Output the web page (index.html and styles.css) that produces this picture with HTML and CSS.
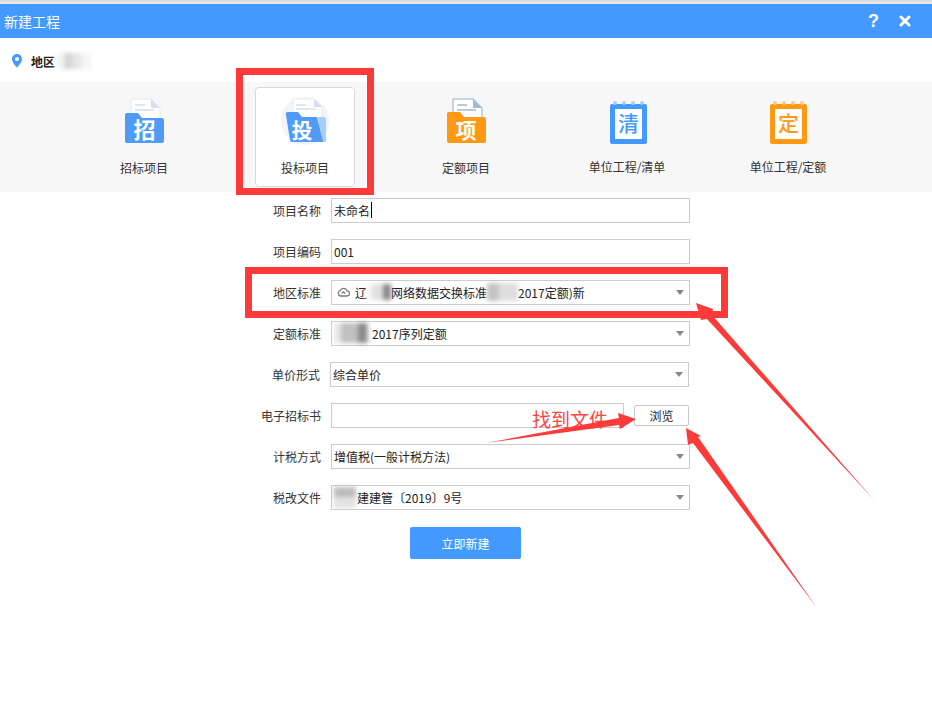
FILE: index.html
```html
<!DOCTYPE html>
<html lang="zh-CN">
<head>
    <meta charset="UTF-8">
    <meta name="viewport" content="width=device-width, initial-scale=1.0">
    <title>新建工程</title>
    <link rel="stylesheet" href="styles.css">
</head>
<body>
    <div class="top-edge"></div>
    <header class="title-bar">
        <span class="title">新建工程</span>
        <div class="title-actions">
            <span class="help">?</span>
            <svg class="close" width="12" height="12" viewBox="0 0 12 12"><path d="M2 2 L10 10 M10 2 L2 10" stroke="#fff" stroke-width="3" stroke-linecap="round"/></svg>
        </div>
    </header>

    <div class="region">
        <svg width="10" height="14" viewBox="0 0 10 14"><path fill-rule="evenodd" fill="#4499ff" d="M5 0 C2.2 0 0 2.2 0 5 C0 8.4 3.6 12 5 13.6 C6.4 12 10 8.4 10 5 C10 2.2 7.8 0 5 0 Z M5 3 A2 2 0 1 1 5 7 A2 2 0 1 1 5 3 Z"/></svg>
        <span class="region-name">地区</span>
        <span class="smudge smudge-region"></span>
    </div>

    <nav class="tabs">
        <div class="tab">
            <svg class="tab-icon" width="48" height="48" viewBox="0 0 48 48">
                <path d="M11 2 H31 L40 11 V30 H11 Z" fill="#fff" stroke="#e3e9f2"/>
                <path d="M31 2 L40 11 H31 Z" fill="#d5e1f0"/>
                <path d="M15 8 H25 M15 13 H34" stroke="#dfe6f0" stroke-width="2"/>
                <path d="M7 16 H18 L22 21 H42 Q44 21 44 23 V44 Q44 46 42 46 H7 Q5 46 5 44 V18 Q5 16 7 16 Z" fill="#4f9bf7"/>
                <text class="icon-char" x="24.5" y="41" font-size="22" fill="#fff">招</text>
            </svg>
            <span class="tab-label">招标项目</span>
        </div>
        <div class="tab tab-active">
            <svg class="tab-icon" width="48" height="48" viewBox="0 0 48 48">
                <circle cx="24" cy="24" r="24" fill="#f2f4f7"/>
                <path d="M12 2 H33 L41 10 V30 H12 Z" fill="#fff" stroke="#e3e9f2"/>
                <path d="M33 2 L41 10 H33 Z" fill="#d5e1f0"/>
                <path d="M15 8 H25 M15 12 H35" stroke="#dfe6f0" stroke-width="2"/>
                <path d="M37 20 H43 Q45 20 45 22 V45 H40 Z" fill="#a6cefc"/>
                <path d="M5 18 Q4 15 7 15 H17 L21 20 H36 L42 45 H11 Q9 45 9 43 Z" fill="#4f9bf7"/>
                <text class="icon-char" x="21" y="41" font-size="21" fill="#fff">投</text>
            </svg>
            <span class="tab-label">投标项目</span>
        </div>
        <div class="tab">
            <svg class="tab-icon" width="48" height="48" viewBox="0 0 48 48">
                <path d="M11 2 H31 L40 11 V30 H11 Z" fill="#fff" stroke="#b4c6da" stroke-width="1.5"/>
                <path d="M31 2 L40 11 H31 Z" fill="#a5b9d0"/>
                <path d="M15 8 H25 M15 13 H34" stroke="#bccbdc" stroke-width="2"/>
                <path d="M7 15 H18 L22 20 H42 Q44 20 44 22 V44 Q44 46 42 46 H7 Q5 46 5 44 V17 Q5 15 7 15 Z" fill="#ff9914"/>
                <text class="icon-char" x="24" y="41" font-size="21" fill="#fff">项</text>
            </svg>
            <span class="tab-label">定额项目</span>
        </div>
        <div class="tab tab-note">
            <svg class="tab-icon" width="48" height="48" viewBox="0 0 48 48">
                <rect x="7" y="7" width="37" height="40" rx="2" fill="#4499ff"/>
                <rect x="12" y="12" width="27" height="30" fill="#fff"/>
                <g fill="#a9d0fc"><circle cx="12" cy="6" r="2"/><circle cx="21" cy="6" r="2"/><circle cx="30" cy="6" r="2"/><circle cx="39" cy="6" r="2"/></g>
                <text class="icon-char icon-char-thin" x="25.5" y="34" font-size="21" fill="#4499ff">清</text>
            </svg>
            <span class="tab-label">单位工程/清单</span>
        </div>
        <div class="tab tab-note">
            <svg class="tab-icon" width="48" height="48" viewBox="0 0 48 48">
                <rect x="6" y="7" width="37" height="40" rx="2" fill="#ff9914"/>
                <rect x="11" y="12" width="27" height="30" fill="#fff"/>
                <g fill="#fcc98a"><circle cx="11" cy="6" r="2"/><circle cx="20" cy="6" r="2"/><circle cx="29" cy="6" r="2"/><circle cx="38" cy="6" r="2"/></g>
                <text class="icon-char icon-char-thin" x="24.5" y="34" font-size="21" fill="#ff9914">定</text>
            </svg>
            <span class="tab-label">单位工程/定额</span>
        </div>
    </nav>

    <main class="form">
        <div class="row">
            <label>项目名称</label>
            <div class="field">未命名<span class="text-cursor"></span></div>
        </div>
        <div class="row">
            <label>项目编码</label>
            <div class="field">001</div>
        </div>
        <div class="row">
            <label>地区标准</label>
            <div class="field select">
                <svg class="cloud" width="13" height="10" viewBox="0 0 13 10"><path d="M3.5 9 H9.8 A2.6 2.6 0 0 0 10 3.8 A3.6 3.6 0 0 0 3.2 3.6 A2.8 2.8 0 0 0 3.5 9 Z M4.6 6.6 L6.5 4.8 L8.4 6.6" fill="none" stroke="#777" stroke-width="1.3"/></svg>
                <span class="select-text">辽<span class="smudge smudge-a"></span>网络数据交换标准<span class="smudge smudge-b"></span>2017定额)新</span>
                <span class="arrow-down"></span>
            </div>
        </div>
        <div class="row">
            <label>定额标准</label>
            <div class="field select">
                <span class="select-text"><span class="smudge smudge-c"></span>2017序列定额</span>
                <span class="arrow-down"></span>
            </div>
        </div>
        <div class="row row-shift">
            <label>单价形式</label>
            <div class="field select">
                <span class="select-text">综合单价</span>
                <span class="arrow-down"></span>
            </div>
        </div>
        <div class="row">
            <label>电子招标书</label>
            <div class="field field-file"></div>
            <button class="browse-btn">浏览</button>
        </div>
        <div class="row">
            <label>计税方式</label>
            <div class="field select">
                <span class="select-text">增值税(一般计税方法)</span>
                <span class="arrow-down"></span>
            </div>
        </div>
        <div class="row">
            <label>税改文件</label>
            <div class="field select">
                <span class="select-text"><span class="smudge smudge-d"></span>建建管〔2019〕9号</span>
                <span class="arrow-down"></span>
            </div>
        </div>
        <button class="submit-btn">立即新建</button>
    </main>

    <!-- red markup drawn over the screenshot -->
    <svg class="markup" width="932" height="707" viewBox="0 0 932 707">
        <rect x="239.5" y="71.5" width="131" height="120" fill="none" stroke="#fc3a3a" stroke-width="7"/>
        <rect x="248.5" y="270.5" width="476" height="44" fill="none" stroke="#fc3a3a" stroke-width="7"/>
        <text class="markup-text" x="532" y="427">找到文件</text>
        <polygon fill="#fc3a3a" points="696,303 713,309 712,315 874,500 707,319 701,320"/>
        <polygon fill="#fc3a3a" points="686,428 701,436 698,437 817,608 693,443 688,445"/>
        <polygon fill="#fc3a3a" points="636,419 618,413 619,418 486,443 619,425 620,429"/>
    </svg>
</body>
</html>
```

FILE: styles.css
```css
* {
    box-sizing: border-box;
}

html, body {
    height: 100%;
}

body {
    position: relative;
    margin: 0;
    overflow: hidden;
    background-color: #fff;
    color: #333;
    font-family: "Noto Sans CJK SC", "Liberation Sans", sans-serif;
    font-size: 12px;
}

.top-edge {
    height: 4px;
    background: linear-gradient(#d8d8d8, #efefef);
}

.title-bar {
    display: flex;
    align-items: center;
    justify-content: space-between;
    height: 34px;
    padding: 0 21px 0 4px;
    background-color: #4499ff;
    color: #fff;
}

.title {
    font-size: 14px;
}

.title-actions {
    display: flex;
    align-items: center;
    gap: 20px;
}

.help {
    font-family: "Liberation Sans", sans-serif;
    font-size: 18px;
    font-weight: bold;
}

.region {
    display: flex;
    align-items: center;
    height: 46px;
    padding-left: 12px;
}

.region-name {
    margin-left: 9px;
    color: #222;
    font-weight: bold;
}

.tabs {
    display: flex;
    gap: 61px;
    height: 110px;
    margin-top: -2px;
    padding: 5px 0 5px 94px;
    background-color: #f7f7f7;
}

.tab {
    display: flex;
    flex-direction: column;
    align-items: center;
    flex: 0 0 100px;
    height: 100px;
    padding-top: 10px;
    border: 1px solid transparent;
    border-radius: 4px;
    white-space: nowrap;
}

.tab-active {
    background-color: #fff;
    border-color: #d5dbe3;
}

.tab-icon {
    flex: none;
    margin-top: -1px;
}

.tab-label {
    margin-top: 15px;
    line-height: 16px;
}

.tab-note .tab-label {
    margin-top: 14px;
}

.icon-char {
    font-family: "Noto Sans CJK SC", sans-serif;
    font-weight: bold;
    text-anchor: middle;
}

.icon-char-thin {
    font-weight: 500;
}

.form {
    display: flex;
    flex-direction: column;
    gap: 16px;
    padding-top: 6px;
}

.row {
    display: flex;
    align-items: center;
    height: 25px;
}

.row label {
    flex: 0 0 321px;
    margin-right: 10px;
    text-align: right;
}

.row-shift {
    margin-left: -1px;
}

.field {
    display: flex;
    align-items: center;
    width: 359px;
    height: 25px;
    padding: 0 0 1px 2px;
    border: 1px solid #ccc;
    background-color: #fff;
    color: #222;
    white-space: nowrap;
}

.field-file {
    width: 293px;
}

.text-cursor {
    width: 1px;
    height: 16px;
    margin-left: 1px;
    background-color: #000;
}

.select {
    justify-content: flex-start;
}

.select-text {
    display: flex;
    align-items: center;
    flex: 1;
}

.cloud {
    flex: none;
    margin: 0 5px 0 3px;
}

.arrow-down {
    flex: none;
    width: 0;
    height: 0;
    margin-right: 5px;
    border-top: 5px solid #888;
    border-left: 4px solid transparent;
    border-right: 4px solid transparent;
}

.browse-btn {
    width: 55px;
    height: 21px;
    margin-left: 10px;
    padding: 0;
    border: 1px solid #c8c8c8;
    border-radius: 2px;
    background-color: #fff;
    color: #222;
    font: inherit;
}

.submit-btn {
    width: 111px;
    height: 32px;
    margin: 1px 0 0 410px;
    border: none;
    border-radius: 2px;
    background-color: #4499ff;
    color: #fff;
    font: inherit;
}

/* blurred-out parts of the text */
.smudge {
    display: inline-block;
    flex: none;
    filter: blur(2px);
}

.smudge-region {
    width: 36px;
    height: 16px;
    background: linear-gradient(90deg, #f4f4f4 0 25%, #d8d6d6 25% 50%, #e6e6e6 50% 72%, #f4f4f4 72%);
}

.smudge-a {
    width: 24px;
    height: 16px;
    background: linear-gradient(90deg, #f4f4f4 0 20%, #e0e0e0 20% 65%, #8a8a8a 65%);
}

.smudge-b {
    width: 31px;
    height: 18px;
    background: linear-gradient(90deg, #c4c4c4 0 40%, #dedede 40%);
}

.smudge-c {
    width: 36px;
    height: 20px;
    margin-right: 2px;
    background: linear-gradient(90deg, #e8e8e8 0 20%, #c0c0c0 20% 68%, #8a8a8a 68% 92%, #e8e8e8 92%);
}

.smudge-d {
    width: 22px;
    height: 21px;
    margin-right: 1px;
    background: linear-gradient(#bdbbbb 0 50%, #e2e2e2 50%);
}

.markup {
    position: absolute;
    top: 0;
    left: 0;
    pointer-events: none;
}

.markup-text {
    fill: #fc4444;
    font-family: "Noto Sans CJK SC", sans-serif;
    font-size: 19px;
}
```
